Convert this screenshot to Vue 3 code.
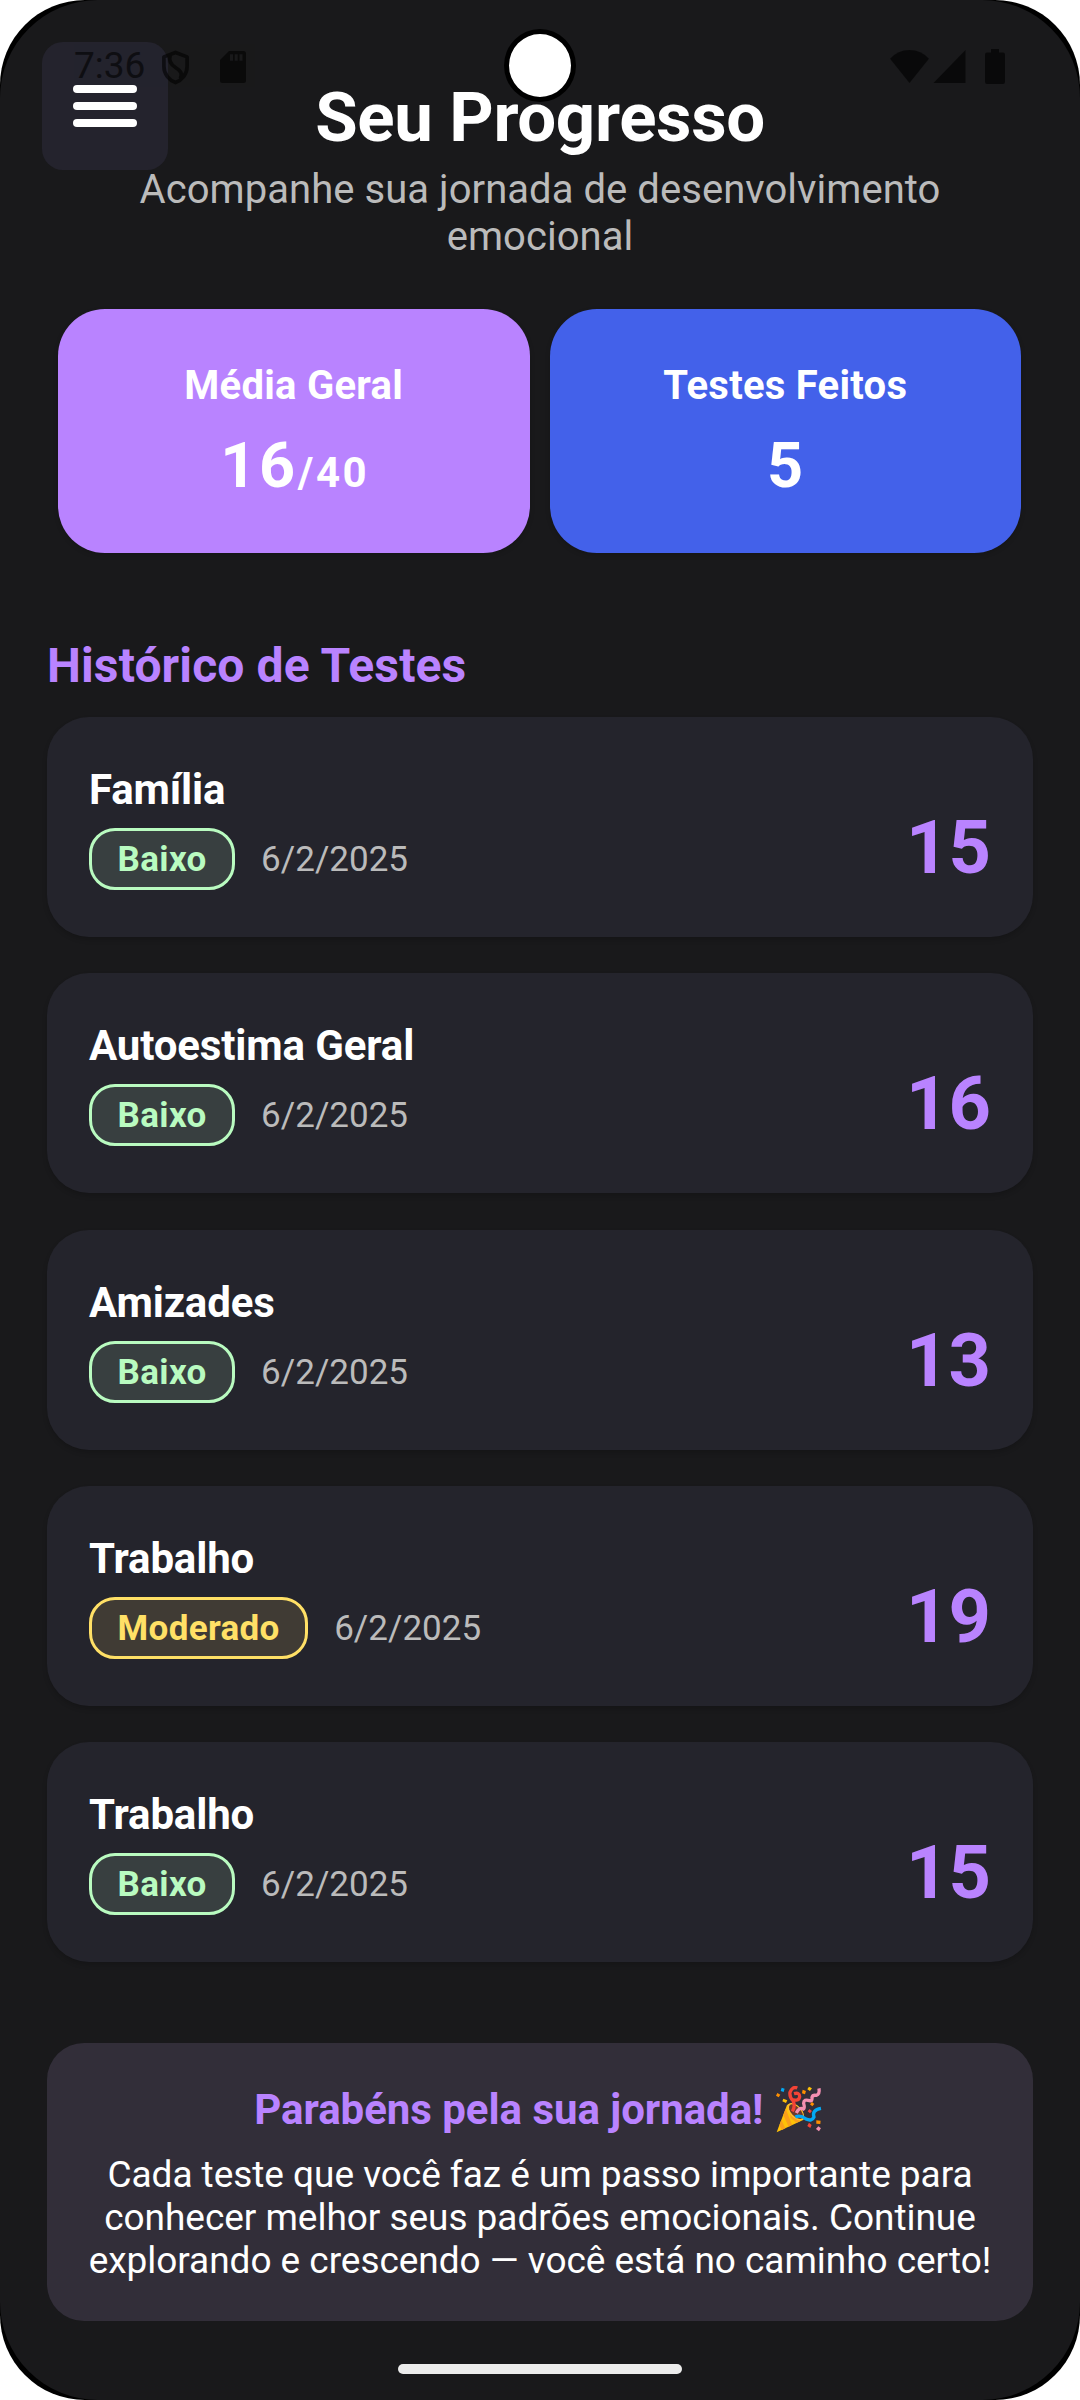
<script setup>
const stats = [
  { label: 'Média Geral', value: '16', suffix: '/40', tone: 'purple' },
  { label: 'Testes Feitos', value: '5', suffix: '', tone: 'blue' },
]

const tests = [
  { name: 'Família', level: 'Baixo', date: '6/2/2025', score: 15 },
  { name: 'Autoestima Geral', level: 'Baixo', date: '6/2/2025', score: 16 },
  { name: 'Amizades', level: 'Baixo', date: '6/2/2025', score: 13 },
  { name: 'Trabalho', level: 'Moderado', date: '6/2/2025', score: 19 },
  { name: 'Trabalho', level: 'Baixo', date: '6/2/2025', score: 15 },
]

const messageLines = [
  'Cada teste que você faz é um passo importante para',
  'conhecer melhor seus padrões emocionais. Continue',
  'explorando e crescendo — você está no caminho certo!',
]
</script>

<template>
  <div class="device">
    <div class="screen">
      <button class="menu" aria-label="Menu"><i></i><i></i><i></i></button>

      <header class="header">
        <h1>Seu Progresso</h1>
        <p>Acompanhe sua jornada de desenvolvimento<br />emocional</p>
      </header>

      <section class="stats">
        <div v-for="s in stats" :key="s.label" class="stat" :class="s.tone">
          <span class="stat-label">{{ s.label }}</span>
          <span class="stat-value">{{ s.value }}<small v-if="s.suffix">{{ s.suffix }}</small></span>
        </div>
      </section>

      <h2>Histórico de Testes</h2>
      <ul class="list">
        <li v-for="(t, i) in tests" :key="i" class="card">
          <div class="info">
            <span class="name">{{ t.name }}</span>
            <div class="meta">
              <span class="badge" :class="t.level.toLowerCase()">{{ t.level }}</span>
              <span class="date">{{ t.date }}</span>
            </div>
          </div>
          <span class="score">{{ t.score }}</span>
        </li>
      </ul>

      <section class="congrats">
        <h3>
          <span>Parabéns pela sua jornada!</span>
          <svg class="party" viewBox="50 50 136 140" aria-hidden="true">
            <path d="M52 189 L83 107 Q96 98 116 112 Q137 132 133 151 Z" fill="#ffc107" />
            <path d="M79 118 L98 166 L88 172 L72 137 Z M66 151 L78 177 L68 182 L60 168 Z M92 128 L123 155 L112 160 L94 146 Z" fill="#f9a01b" />
            <ellipse cx="109" cy="127" rx="31" ry="18" transform="rotate(47 109 127)" fill="#fdbf2d" />
            <ellipse cx="110" cy="127" rx="27" ry="14" transform="rotate(47 110 127)" fill="#6d3a2b" />
            <g fill="none" stroke-width="10">
              <path d="M99 126 Q109 110 101 94 Q90 83 92 69 Q99 50 114 56 M96 90 Q119 97 121 82 Q121 68 104 73" stroke="#f44336" />
              <path d="M111 131 Q120 112 132 119 Q137 116 133 102 Q133 88 151 94 Q160 97 158 84 Q160 76 171 78 Q182 75 179 57" stroke="#f48fb1" />
              <path d="M108 143 Q123 136 140 149 Q158 157 164 143 Q157 122 185 117" stroke="#03a9f4" />
            </g>
            <g fill="#03a9f4"><path d="M67 55l9 3-3 10-9-3z" /></g>
            <g fill="#ff8f00">
              <path d="M54 71l9 5-5 8-8-5zM130 61l10 4-3 10-9-3zM158 98l7 6-6 7-7-6zM171 153l13 1-1 10-12-1z" />
            </g>
            <g fill="#ffc107"><path d="M72 88l12 5-4 8-11-5zM149 52l9 5-6 8-8-5z" /></g>
            <g fill="#f44336"><path d="M151 119l7 6-6 7-7-6zM149 160l8 7-4 9-9-6z" /></g>
            <g fill="#f48fb1"><path d="M177 171l8 6-6 9-9-7z" /></g>
          </svg>
        </h3>
        <p><span v-for="l in messageLines" :key="l">{{ l }}</span></p>
      </section>

      <div class="status">
        <div class="status-left">
          <span class="clock">7:36</span>
          <svg class="shield" viewBox="0 0 30 36">
            <path d="M15 2.4 L27 7 V17 C27 25 21.5 31.2 15 33.6 C8.5 31.2 3 25 3 17 V7 Z" fill="none" stroke="#000" stroke-width="3.8" stroke-linejoin="round" />
            <path d="M9.5 5 C7.5 12 11 15.500 15 18 C20.500 21.500 22.500 24 20 29.500" fill="none" stroke="#000" stroke-width="3.8" />
          </svg>
          <svg class="sd" viewBox="0 0 26 32">
            <path fill-rule="evenodd" d="M9 0H23.500Q26 0 26 2.500V29.500Q26 32 23.500 32H2.500Q0 32 0 29.500V9ZM10 3.300V9.700H13V3.300ZM14.700 3.300V9.700H17.700V3.300ZM19.500 3.300V9.700H22.500V3.300Z" />
          </svg>
        </div>
        <div class="status-right">
          <svg class="wifi" viewBox="0 0 40 34"><path d="M0 9 Q8 0 20 0 Q32 0 40 9 L20 34 Z" /></svg>
          <svg class="signal" viewBox="0 0 33 34"><path d="M33 0 V34 H0 Z" /></svg>
          <svg class="battery" viewBox="0 0 20 35"><path d="M6 0H14V3.500H18Q20 3.500 20 5.500V33Q20 35 18 35H2Q0 35 0 33V5.500Q0 3.500 2 3.500H6Z" /></svg>
        </div>
      </div>
      <div class="camera"></div>
      <div class="home-bar"></div>
    </div>
  </div>
</template>

<style>
body {
  background: #fff;
}
</style>

<style scoped>
.device {
  width: 1080px;
  height: 2400px;
  background: #000;
  border-radius: 85px;
  overflow: hidden;
  font-family: Roboto, 'Liberation Sans', sans-serif;
}
.screen {
  position: relative;
  box-sizing: border-box;
  width: 1080px;
  height: 2400px;
  padding: 78px 47px 0;
  background: #19191b;
  border-radius: 98px;
  color: #fff;
}
h1, h2, h3, p, ul {
  margin: 0;
  padding: 0;
}
.menu {
  position: absolute;
  left: 42px;
  top: 42px;
  width: 126px;
  height: 128px;
  box-sizing: border-box;
  padding: 43px 0 0 31px;
  border: 0;
  border-radius: 21px;
  background: #24232d;
  display: flex;
  flex-direction: column;
  gap: 9px;
}
.menu i {
  display: block;
  width: 64px;
  height: 8px;
  border-radius: 4px;
  background: #fff;
}
.header {
  text-align: center;
}
.header h1 {
  font-size: 69px;
  line-height: 80px;
  font-weight: 700;
  letter-spacing: -0.36px;
}
.header p {
  margin-top: 8px;
  font-size: 40px;
  line-height: 47px;
  letter-spacing: 0.05px;
  color: #bbb;
}
.stats {
  display: flex;
  gap: 20px;
  margin: 49px 12px 0 11px;
}
.stat {
  flex: 1;
  height: 244px;
  box-sizing: border-box;
  padding-top: 53px;
  border-radius: 47px;
  display: flex;
  flex-direction: column;
  align-items: center;
  box-shadow: 0 2px 5px rgba(0, 0, 0, 0.16);
}
.purple { background: #b983ff; }
.blue { background: #4361ea; }
.stat-label {
  font-size: 40px;
  line-height: 47px;
  font-weight: 700;
  letter-spacing: 0.26px;
}
.stat-value {
  margin-top: 20px;
  padding-left: 2px;
  font-size: 63px;
  line-height: 74px;
  font-weight: 700;
  letter-spacing: 2.6px;
}
.stat-value small {
  font-size: 42px;
}
h2 {
  margin-top: 85px;
  font-size: 48px;
  line-height: 56px;
  font-weight: 700;
  letter-spacing: 0.13px;
  color: #b983ff;
}
.list {
  list-style: none;
  margin-top: 23px;
  display: flex;
  flex-direction: column;
  gap: 36.25px;
}
.card {
  height: 220px;
  box-sizing: border-box;
  padding: 48px 42px 46px;
  border-radius: 42px;
  background: #24242c;
  box-shadow: 0 3px 5px rgba(0, 0, 0, 0.16);
  display: flex;
  justify-content: space-between;
  align-items: flex-end;
}
.info {
  align-self: flex-start;
  display: flex;
  flex-direction: column;
}
.name {
  font-size: 42px;
  line-height: 49px;
  font-weight: 700;
  letter-spacing: -0.14px;
}
.meta {
  margin-top: 13px;
  display: flex;
  align-items: center;
}
.badge {
  box-sizing: border-box;
  height: 62px;
  padding: 0 25.6px;
  border: 3px solid;
  border-radius: 26px;
  font-size: 35px;
  line-height: 58px;
  font-weight: 700;
  letter-spacing: 0.32px;
}
.baixo {
  color: #b9fbc0;
  background: #383f40;
}
.moderado {
  color: #ffe066;
  background: #403b34;
}
.date {
  margin-left: 26px;
  font-size: 35px;
  line-height: 63px;
  padding-top: 1px;
  color: #bbb;
}
.score {
  font-size: 74px;
  line-height: 86px;
  font-weight: 700;
  color: #b983ff;
}
.congrats {
  margin-top: 81px;
  height: 278px;
  box-sizing: border-box;
  padding-top: 42px;
  border-radius: 37px;
  background: #322e39;
  text-align: center;
}
.congrats h3 {
  display: flex;
  justify-content: center;
  align-items: center;
  gap: 13px;
  font-size: 42px;
  line-height: 49px;
  font-weight: 700;
  letter-spacing: -0.04px;
  color: #b983ff;
}
.party {
  width: 45.3px;
  height: 46.7px;
  margin-right: 4px;
}
.congrats p {
  margin-top: 19px;
  font-size: 37px;
  line-height: 43px;
  letter-spacing: -0.04px;
}
.congrats p span {
  display: block;
  white-space: nowrap;
}
.status {
  position: absolute;
  left: 74px;
  right: 75px;
  top: 44px;
  height: 44px;
  display: flex;
  justify-content: space-between;
  opacity: 0.6;
  color: #000;
  pointer-events: none;
}
.status-left,
.status-right {
  display: flex;
  align-items: center;
}
.clock {
  width: 87px;
  font-size: 37px;
  line-height: 44px;
}
.shield { width: 29px; height: 35px; margin-top: 3px; }
.sd { width: 26px; height: 32px; margin: 2px 0 0 30px; }
.wifi { width: 39px; height: 33px; }
.signal { width: 33px; height: 33px; margin-left: 4px; }
.battery { width: 20px; height: 35px; margin-left: 19px; }
.camera {
  position: absolute;
  left: 504px;
  top: 29px;
  width: 72px;
  height: 73px;
  box-sizing: border-box;
  border: 5px solid #000;
  border-radius: 50%;
  background: #fff;
}
.home-bar {
  position: absolute;
  left: 398px;
  top: 2364px;
  width: 284px;
  height: 10px;
  border-radius: 5px;
  background: #ececec;
}
</style>
